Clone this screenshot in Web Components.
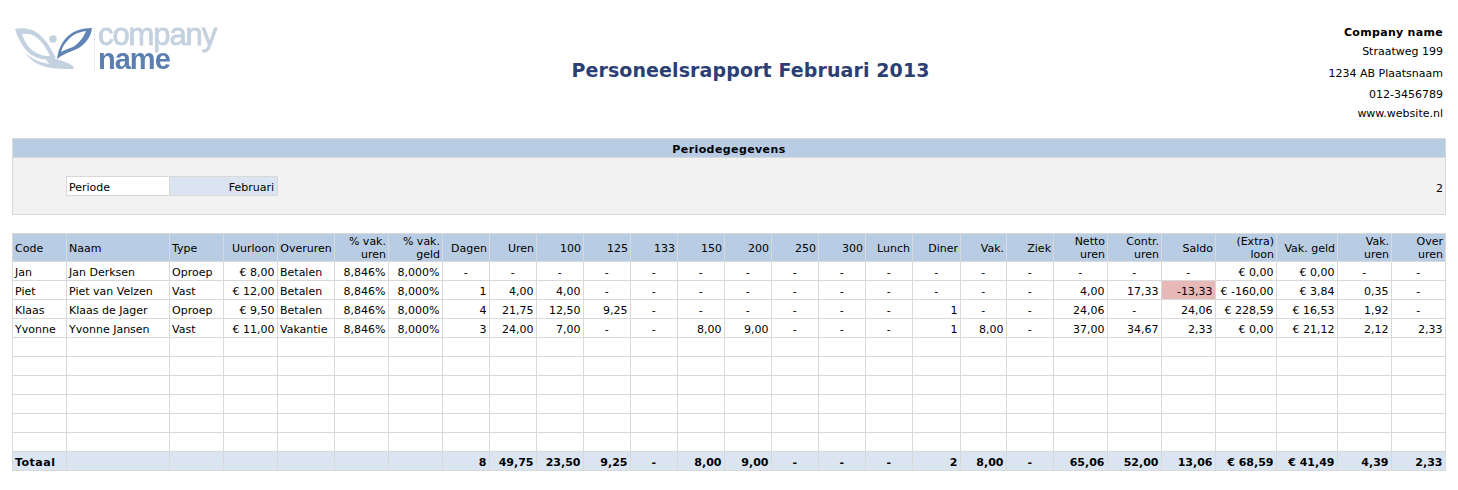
<!DOCTYPE html>
<html lang="nl">
<head>
<meta charset="utf-8">
<title>Personeelsrapport</title>
<style>
  html, body { margin: 0; background: #fff; }
  body { font: 11px "DejaVu Sans", Verdana, sans-serif; color: #000; }
</style>
</head>
<body>
<report-page></report-page>

<script>
const COLS = [54,103,54,54,57,54,54,47,47,47,47,47,47,47,47,47,47,48,46,47,54,54,54,61,61,54,54];

const HEAD = [
  ['Code','l'],['Naam','l'],['Type','l'],['Uurloon','r'],['Overuren','c'],['% vak. uren','r'],['% vak. geld','r'],
  ['Dagen','r'],['Uren','r'],['100','r'],['125','r'],['133','r'],['150','r'],['200','r'],['250','r'],['300','r'],
  ['Lunch','r'],['Diner','r'],['Vak.','r'],['Ziek','r'],['Netto uren','r'],['Contr. uren','r'],['Saldo','r'],
  ['(Extra) loon','r'],['Vak. geld','r'],['Vak. uren','r'],['Over uren','r']
];

const ROWS = [
  ['Jan','Jan Derksen','Oproep','€ 8,00','Betalen','8,846%','8,000%','-','-','-','-','-','-','-','-','-','-','-','-','-','-','-','-','€ 0,00','€ 0,00','-','-'],
  ['Piet','Piet van Velzen','Vast','€ 12,00','Betalen','8,846%','8,000%','1','4,00','4,00','-','-','-','-','-','-','-','-','-','-','4,00','17,33','-13,33','€ -160,00','€ 3,84','0,35','-'],
  ['Klaas','Klaas de Jager','Oproep','€ 9,50','Betalen','8,846%','8,000%','4','21,75','12,50','9,25','-','-','-','-','-','-','1','-','-','24,06','-','24,06','€ 228,59','€ 16,53','1,92','-'],
  ['Yvonne','Yvonne Jansen','Vast','€ 11,00','Vakantie','8,846%','8,000%','3','24,00','7,00','-','-','8,00','9,00','-','-','-','1','8,00','-','37,00','34,67','2,33','€ 0,00','€ 21,12','2,12','2,33']
];

const TOTAL = ['Totaal','','','','','','','8','49,75','23,50','9,25','-','8,00','9,00','-','-','-','2','8,00','-','65,06','52,00','13,06','€ 68,59','€ 41,49','4,39','2,33'];

// kolommen met links uitgelijnde tekst
const isLeft = i => i === 0 || i === 1 || i === 2 || i === 4;

class CompanyLogo extends HTMLElement {
  constructor() {
    super();
    this.attachShadow({ mode: 'open' });
    this.shadowRoot.innerHTML = `
      <style>
        :host { display: flex; align-items: flex-start; width: 220px; height: 56px; filter: blur(.3px); }
        svg { display: block; flex: none; margin-top: 2px; }
        .rule { width: 1px; height: 45px; background: #e8edf3; margin: 5px 3px 0 0; flex: none; }
        .words { display: flex; flex-direction: column; font-family: "Liberation Sans", Arial, sans-serif; white-space: nowrap; }
        .top { font-size: 31px; line-height: 25px; color: #c4d1e0; letter-spacing: -1.1px; -webkit-text-stroke: .8px #c4d1e0; }
        .bot { font-size: 29px; line-height: 25px; color: #5a7fb0; letter-spacing: -1px; font-weight: 700; }
      </style>
      <svg width="81" height="50" viewBox="13 24 81 50">
        <path fill="#c4d1e0" fill-rule="evenodd" d="M15 29 C24 27 35 29 42 37 C49 44 52 51 56 58 C50 60 44 60 38 58 C28 55 20 45 15 29 Z M22 34 C25 44 31 51 39 54 C43 56 47 56 50 56 C46 48 42 41 36 37 C32 34 27 33 22 34 Z"/>
        <path fill="#c4d1e0" d="M25 53 C33 60 42 63 50 64 C44 60 46 57 52 58 C60 60 67 62 73 66 L74 69 C64 69 54 69 46 67 C38 65 30 60 25 53 Z"/>
        <circle cx="53" cy="39" r="3.7" fill="#c4d1e0"/>
        <path fill="#5f84b5" fill-rule="evenodd" d="M92 28 C91 38 84 47 72 51 C67 53 62 55 57 59 C58 51 61 43 67 37 C73 31 82 28 92 28 Z M86 31 C78 32 72 35 68 40 C64 44 62 48 61 52 C65 50 69 48 73 47 C79 43 84 37 86 31 Z"/>
      </svg>
      <div class="rule"></div>
      <div class="words"><span class="top">company</span><span class="bot">name</span></div>
    `;
  }
}
customElements.define('company-logo', CompanyLogo);

class ReportHeader extends HTMLElement {
  constructor() {
    super();
    this.attachShadow({ mode: 'open' });
    this.shadowRoot.innerHTML = `
      <style>
        :host { display: grid; grid-template-columns: 1fr auto 1fr; height: 138px; }
        .logo { padding: 22px 0 0 13px; }
        h1 { margin: 0; padding: 58px 0 0 43px; font-size: 19px; line-height: 24px; font-weight: bold; color: #2b3f75; white-space: nowrap; letter-spacing: .1px; }
        address { font-style: normal; text-align: right; padding: 23px 15px 0 0; line-height: 19px; }
        address b { display: block; letter-spacing: .3px; }
        .gap3 { margin-top: 3px; }
        .gap2 { margin-top: 2px; }
      </style>
      <div class="logo"><company-logo></company-logo></div>
      <h1>Personeelsrapport Februari 2013</h1>
      <address>
        <div><b>Company name</b></div>
        <div>Straatweg 199</div>
        <div class="gap3">1234 AB Plaatsnaam</div>
        <div class="gap2">012-3456789</div>
        <div>www.website.nl</div>
      </address>
    `;
  }
}
customElements.define('report-header', ReportHeader);

class PeriodPanel extends HTMLElement {
  constructor() {
    super();
    this.attachShadow({ mode: 'open' });
    this.shadowRoot.innerHTML = `
      <style>
        :host { display: block; width: 1434px; box-sizing: border-box; margin-left: 12px; border: 1px solid #d9d9d9; background: #f2f2f2; }
        .title { height: 16px; padding-top: 2px; line-height: 18px; background: #b8cce4; text-align: center; font-weight: bold; border-bottom: 1px solid #d9d9d9; letter-spacing: .4px; }
        .body { display: flex; align-items: center; height: 56px; padding: 0 2px 0 53px; }
        .box { display: flex; width: 212px; height: 20px; box-sizing: border-box; border: 1px solid #d9d9d9; line-height: 22px; }
        .label { width: 103px; background: #fff; padding-left: 2px; box-sizing: border-box; border-right: 1px solid #d9d9d9; }
        .value { flex: 1; background: #dbe5f1; text-align: right; padding-right: 3px; }
        .nr { margin-left: auto; padding-top: 4px; }
      </style>
      <div class="title"><slot name="title"></slot></div>
      <div class="body">
        <div class="box"><div class="label"><slot name="label"></slot></div><div class="value"><slot name="value"></slot></div></div>
        <div class="nr"><slot name="nr"></slot></div>
      </div>
    `;
  }
}
customElements.define('period-panel', PeriodPanel);

class StaffTable extends HTMLElement {
  constructor() {
    super();
    this.attachShadow({ mode: 'open' });
    const cols = COLS.map(w => `<col style="width:${w}px">`).join('');
    const head = HEAD.map(([t, a]) => `<th class="${a}">${t}</th>`).join('');
    const row = (cells, cls) => `<tr class="${cls || ''}">` + cells.map((t, i) => {
      let c = isLeft(i) ? 'l' : 'r';
      if (t === '-') c = 'dash';
      if (t === '-13,33') c += ' neg';
      if (t === 'Totaal') c += ' wide';
      return `<td class="${c}">${t}</td>`;
    }).join('') + '</tr>';
    const blank = new Array(27).fill('');
    let body = ROWS.map(r => row(r)).join('');
    for (let i = 0; i < 6; i++) body += row(blank);
    this.shadowRoot.innerHTML = `
      <style>
        :host { display: block; margin: 18px 0 0 12px; }
        table { table-layout: fixed; border-collapse: collapse; width: 1434px; }
        th, td { border: 1px solid #d9d9d9; white-space: nowrap; overflow: hidden; box-sizing: border-box; }
        th { background: #b8cce4; font-weight: normal; height: 28px; white-space: normal; line-height: 13px; padding: 1px 2px 0; }
        td { height: 19px; line-height: 13px; padding: 3px 2.5px 0 2px; }
        .l { text-align: left; }
        .r { text-align: right; }
        .c { text-align: center; }
        .dash { text-align: center; }
        .neg { background: #e6b8b7; }
        .total td { background: #dbe5f1; font-weight: bold; }
        .total .wide { letter-spacing: .5px; }
      </style>
      <table>
        <colgroup>${cols}</colgroup>
        <thead><tr>${head}</tr></thead>
        <tbody>${body}${row(TOTAL, 'total')}</tbody>
      </table>
    `;
  }
}
customElements.define('staff-table', StaffTable);

class ReportPage extends HTMLElement {
  constructor() {
    super();
    this.attachShadow({ mode: 'open' });
    this.shadowRoot.innerHTML = `
      <style>:host { display: block; width: 1458px; height: 490px; overflow: hidden; }</style>
      <report-header></report-header>
      <period-panel>
        <span slot="title">Periodegegevens</span>
        <span slot="label">Periode</span>
        <span slot="value">Februari</span>
        <span slot="nr">2</span>
      </period-panel>
      <staff-table></staff-table>
    `;
  }
}
customElements.define('report-page', ReportPage);
</script>
</body>
</html>
